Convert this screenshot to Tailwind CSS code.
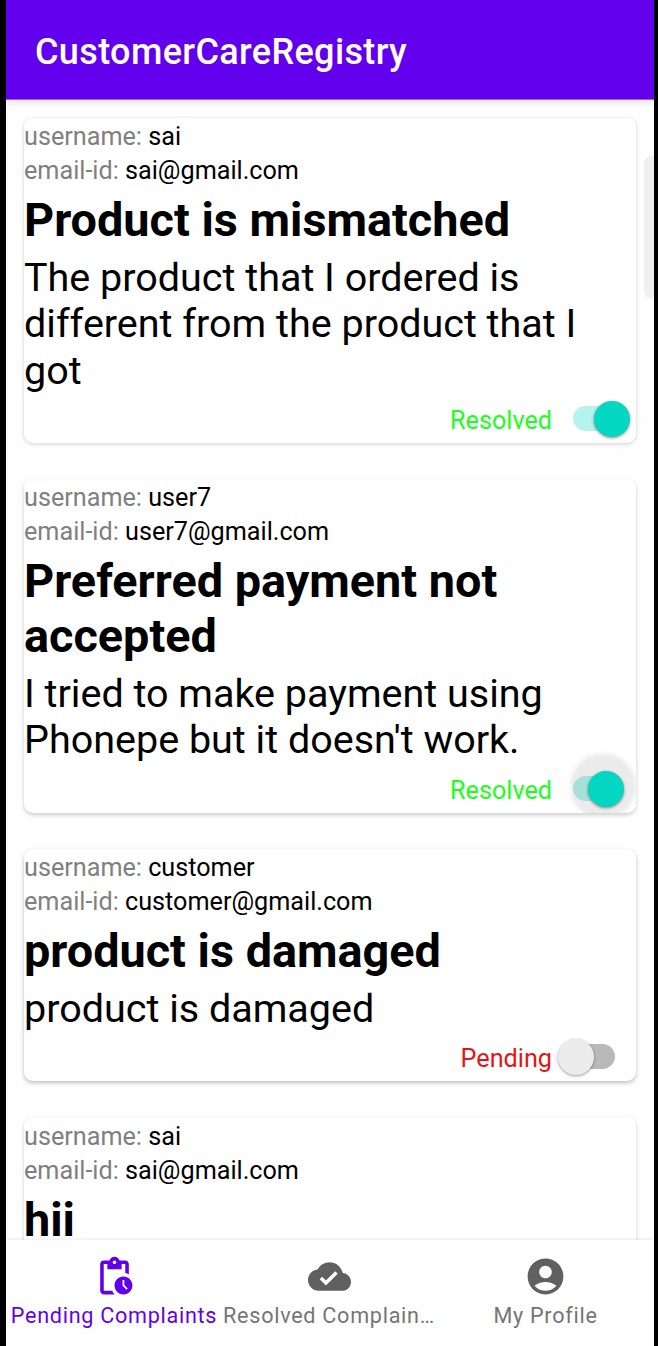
<!DOCTYPE html>
<html lang="en">
<head>
<meta charset="utf-8">
<title>CustomerCareRegistry</title>
<script src="https://cdn.jsdelivr.net/npm/@tailwindcss/browser@4"></script>
</head>
<body class="bg-black">
<div class="w-[658px] h-[1346px] bg-black pl-[6px] pr-1 overflow-hidden font-['Roboto',sans-serif] text-black">
  <div class="h-full flex flex-col bg-[#fefefe] relative">
    <header class="h-[100px] shrink-0 bg-[#6200ee] border-b border-[#a45cf5] flex items-center pl-[29px] pt-[4px] shadow-[0_2px_8px_rgba(0,0,0,0.12)] z-10">
      <h1 class="text-[36px] font-medium text-white leading-[42px] tracking-[0.37px]">CustomerCareRegistry</h1>
    </header>

    <main class="flex-1 min-h-0 overflow-hidden pl-[18px] pr-[18px] pt-[18px] flex flex-col gap-[36px]">
      <article class="h-[325px] shrink-0 rounded-[9px] bg-white shadow-[0_1px_4px_rgba(0,0,0,0.18)] flex flex-col pt-[2px] overflow-hidden">
        <p class="text-[25.2px] leading-[34px]"><span class="text-[#808080]">username:</span> sai</p>
        <p class="text-[25.2px] leading-[34px]"><span class="text-[#808080]">email-id:</span> sai@gmail.com</p>
        <h2 class="text-[46.8px] leading-[55px] font-bold mt-[5px]">Product is mismatched</h2>
        <p class="text-[39.5px] leading-[46.4px] mt-[7px]">The product that I ordered is<br>different from the product that I<br>got</p>
        <div class="mt-auto h-[48px] flex items-center justify-end">
          <span class="text-[25.2px] leading-[30px] text-[#1bff1b] mr-[21px] pt-[3px]">Resolved</span>
          <span class="relative w-[63px] h-[48px]">
            <span class="absolute left-0 top-[11px] w-[43px] h-[25px] rounded-full bg-[#b5f3ec]"></span>
            <span class="absolute left-[21px] top-[6px] size-[36px] rounded-full bg-[#03d6c1] shadow-[0_1px_3px_rgba(0,0,0,0.45)]"></span>
          </span>
        </div>
      </article>

      <article class="h-[334px] shrink-0 rounded-[9px] bg-white shadow-[0_2px_4px_rgba(0,0,0,0.2)] flex flex-col pt-[2px] overflow-hidden">
        <p class="text-[25.2px] leading-[34px]"><span class="text-[#808080]">username:</span> user7</p>
        <p class="text-[25.2px] leading-[34px]"><span class="text-[#808080]">email-id:</span> user7@gmail.com</p>
        <h2 class="text-[46.8px] leading-[55px] font-bold mt-[5px]">Preferred payment not<br>accepted</h2>
        <p class="text-[39.5px] leading-[46.4px] mt-[7px]">I tried to make payment using<br>Phonepe but it doesn't work.</p>
        <div class="mt-auto h-[48px] flex items-center justify-end">
          <span class="text-[25.2px] leading-[30px] text-[#1bff1b] mr-[21px] pt-[3px]">Resolved</span>
          <span class="relative w-[63px] h-[48px]">
            <span class="absolute left-0 top-[11px] w-[43px] h-[25px] rounded-full bg-[#b5f3ec]"></span>
            <span class="absolute left-[-3px] top-[-12px] size-[66px] rounded-full bg-black/8 blur-[2px]"></span>
            <span class="absolute left-[15px] top-[6px] size-[36px] rounded-full bg-[#03d6c1] shadow-[0_1px_3px_rgba(0,0,0,0.45)]"></span>
          </span>
        </div>
      </article>

      <article class="h-[232px] shrink-0 rounded-[9px] bg-white shadow-[0_2px_4px_rgba(0,0,0,0.25)] flex flex-col pt-[2px] overflow-hidden">
        <p class="text-[25.2px] leading-[34px]"><span class="text-[#808080]">username:</span> customer</p>
        <p class="text-[25.2px] leading-[34px]"><span class="text-[#808080]">email-id:</span> customer@gmail.com</p>
        <h2 class="text-[46.8px] leading-[55px] font-bold mt-[5px]">product is damaged</h2>
        <p class="text-[39.5px] leading-[46.4px] mt-[7px]">product is damaged</p>
        <div class="mt-auto h-[48px] flex items-center justify-end">
          <span class="text-[25.2px] leading-[30px] text-[#e51515] mr-[7px] pt-[4px]">Pending</span>
          <span class="relative w-[77px] h-[48px]">
            <span class="absolute left-[14px] top-[11px] w-[42px] h-[25px] rounded-full bg-[#b9b9b9]"></span>
            <span class="absolute -left-px top-[6px] size-[36px] rounded-full bg-[#ececec] shadow-[0_1px_3px_rgba(0,0,0,0.4)]"></span>
          </span>
        </div>
      </article>

      <article class="h-[232px] shrink-0 rounded-[9px] bg-white shadow-[0_2px_4px_rgba(0,0,0,0.18)] flex flex-col pt-[3px] overflow-hidden">
        <p class="text-[25.2px] leading-[34px]"><span class="text-[#808080]">username:</span> sai</p>
        <p class="text-[25.2px] leading-[34px]"><span class="text-[#808080]">email-id:</span> sai@gmail.com</p>
        <h2 class="text-[46.8px] leading-[55px] font-bold mt-[5px]">hii</h2>
      </article>
    </main>

    <div class="absolute right-0 top-[155px] w-[10px] h-[144px] rounded-l-[9px] bg-[#efefef]"></div>

    <nav class="h-[106px] shrink-0 bg-white grid grid-cols-3 shadow-[0_-1px_3px_rgba(0,0,0,0.08)] z-10 text-[21.6px] leading-[26px] tracking-[0.72px] text-[#757575] whitespace-nowrap">
      <div class="flex flex-col items-center pt-[15px] text-[#6200ee]">
        <svg class="size-[43px]" viewBox="0 0 24 24" fill="currentColor"><path d="M17 12c-2.76 0-5 2.24-5 5s2.24 5 5 5 5-2.24 5-5-2.24-5-5-5zm1.65 7.35L16.5 17.2V14h1v2.79l1.85 1.85-.7.71zM18 3h-3.18C14.4 1.84 13.3 1 12 1s-2.4.84-2.82 2H6c-1.1 0-2 .9-2 2v15c0 1.1.9 2 2 2h6.11c-.59-.57-1.07-1.25-1.42-2H6V5h2v3h8V5h2v5.08c.71.1 1.38.31 2 .6V5c0-1.1-.9-2-2-2zm-6 2c-.55 0-1-.45-1-1s.45-1 1-1 1 .45 1 1-.45 1-1 1z"/></svg>
        <span class="mt-[5px]">Pending Complaints</span>
      </div>
      <div class="flex flex-col items-center pt-[15px] pr-[2px]">
        <svg class="size-[43px] text-[#606060]" viewBox="0 0 24 24" fill="currentColor"><path d="M19.35 10.04C18.67 6.59 15.64 4 12 4 9.11 4 6.6 5.64 5.35 8.04 2.34 8.36 0 10.91 0 14c0 3.31 2.69 6 6 6h13c2.76 0 5-2.24 5-5 0-2.64-2.05-4.78-4.65-4.96zM10 17l-3.5-3.5 1.41-1.41L10 14.17 15.18 9l1.41 1.41L10 17z"/></svg>
        <span class="mt-[5px]">Resolved Complain…</span>
      </div>
      <div class="flex flex-col items-center pt-[15px] pr-px">
        <svg class="size-[43px] text-[#606060]" viewBox="0 0 24 24" fill="currentColor"><path d="M12 2C6.48 2 2 6.48 2 12s4.48 10 10 10 10-4.48 10-10S17.52 2 12 2zm0 4c1.93 0 3.5 1.57 3.5 3.5S13.93 13 12 13s-3.5-1.57-3.5-3.5S10.07 6 12 6zm0 14c-2.03 0-4.43-.82-6.14-2.88C7.55 15.8 9.68 15 12 15s4.45.8 6.14 2.12C16.43 19.18 14.03 20 12 20z"/></svg>
        <span class="mt-[5px]">My Profile</span>
      </div>
    </nav>
  </div>
</div>
</body>
</html>
